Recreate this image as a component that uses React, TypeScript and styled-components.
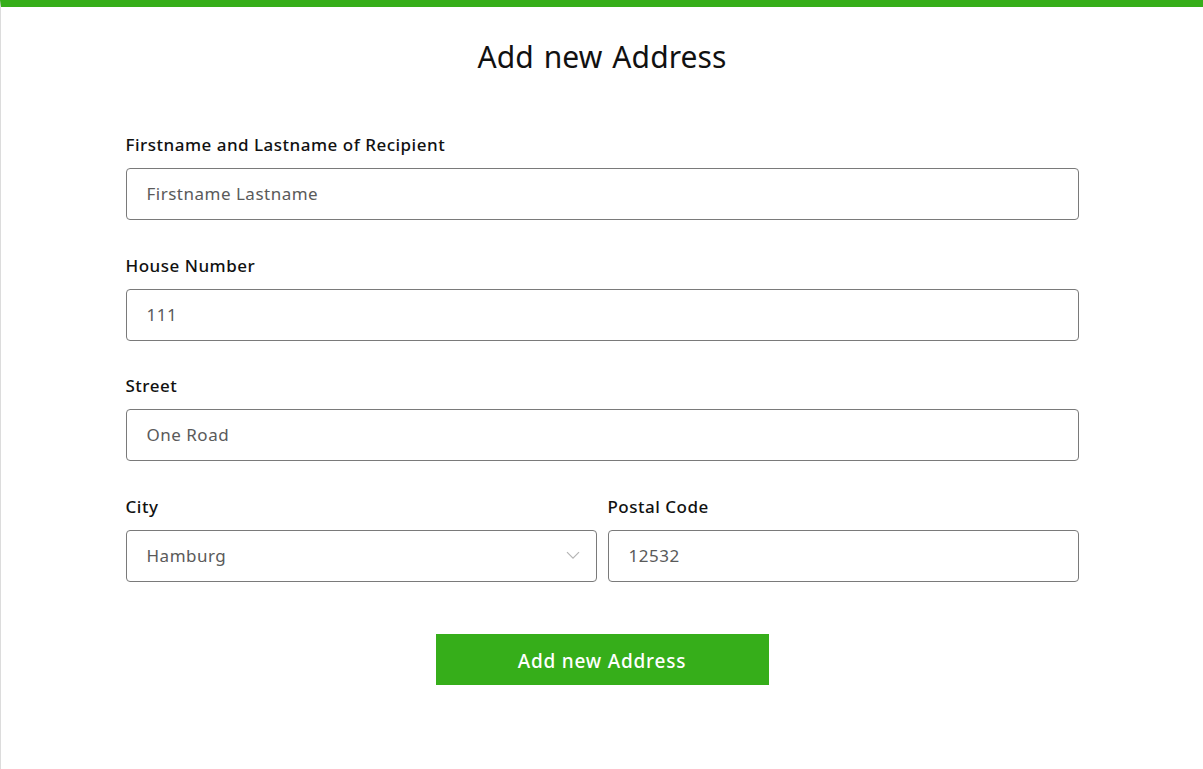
import styled, { createGlobalStyle } from "styled-components";

const GlobalStyle = createGlobalStyle`
    html, body {
        margin: 0;
        padding: 0;
        background: #ffffff;
    }

    body {
        font-family: "Noto Sans", "Open Sans", sans-serif;
        color: #111111;
    }

    * {
        box-sizing: border-box;
    }
`;

const Page = styled.div`
    min-height: 100vh;
    border-top: 7px solid #36ae1a;
    border-left: 1px solid #dcdcdc;
    display: flex;
    flex-direction: column;
    align-items: center;
    padding-top: 30px;
`;

const Title = styled.h1`
    margin: 0;
    font-size: 30px;
    line-height: 40px;
    font-weight: 400;
    letter-spacing: 0.1px;
    word-spacing: 2px;
    color: #111111;
`;

const Form = styled.form`
    width: 953px;
    margin-top: 56px;
    display: flex;
    flex-direction: column;
    row-gap: 33.5px;
`;

const Row = styled.div`
    display: grid;
    grid-template-columns: 1fr 1fr;
    column-gap: 11px;
`;

const Field = styled.label`
    display: flex;
    flex-direction: column;
    row-gap: 11px;
`;

const Label = styled.span`
    font-size: 17px;
    line-height: 24px;
    font-weight: 500;
    letter-spacing: 0.5px;
    color: #111111;
`;

const InputBox = styled.div`
    position: relative;
    height: 52px;
    border: 1px solid #7a7a7a;
    border-radius: 4px;
    display: flex;
    align-items: center;
    padding: 0 20px;
`;

const Input = styled.input`
    border: none;
    outline: none;
    width: 100%;
    padding: 0 0 1px;
    background: transparent;
    font-family: inherit;
    font-size: 17px;
    letter-spacing: 0.5px;
    color: #5a5a5a;

    &::placeholder {
        color: #5a5a5a;
    }
`;

const Chevron = styled.svg`
    position: absolute;
    right: 16px;
    top: 50%;
    transform: translateY(-60%);
`;

const Actions = styled.div`
    display: flex;
    justify-content: center;
    margin-top: 18.5px;
`;

const SubmitButton = styled.button`
    width: 333px;
    height: 51px;
    border: none;
    padding: 3px 0 0;
    background: #36ae1a;
    color: #ffffff;
    font-family: inherit;
    font-size: 19px;
    font-weight: 500;
    letter-spacing: 0.8px;
    cursor: pointer;
`;

interface TextFieldProps {
    label: string;
    value?: string;
    placeholder?: string;
    select?: boolean;
}

const TextField: React.FC<TextFieldProps> = ({ label, value, placeholder, select }) => {
    return (
        <Field>
            <Label>{label}</Label>
            <InputBox>
                <Input defaultValue={value} placeholder={placeholder} readOnly={select} />
                {select && (
                    <Chevron width="14" height="8" viewBox="0 0 14 8" fill="none">
                        <path d="M1 1l6 6 6-6" stroke="#b5b5b5" strokeWidth="1.2" />
                    </Chevron>
                )}
            </InputBox>
        </Field>
    );
};

export default function App() {
    return (
        <>
            <GlobalStyle />
            <Page>
                <Title>Add new Address</Title>
                <Form onSubmit={(e) => e.preventDefault()}>
                    <TextField
                        label="Firstname and Lastname of Recipient"
                        placeholder="Firstname Lastname"
                    />
                    <TextField label="House Number" value="111" />
                    <TextField label="Street" value="One Road" />
                    <Row>
                        <TextField label="City" value="Hamburg" select />
                        <TextField label="Postal Code" value="12532" />
                    </Row>
                    <Actions>
                        <SubmitButton type="submit">Add new Address</SubmitButton>
                    </Actions>
                </Form>
            </Page>
        </>
    );
}
